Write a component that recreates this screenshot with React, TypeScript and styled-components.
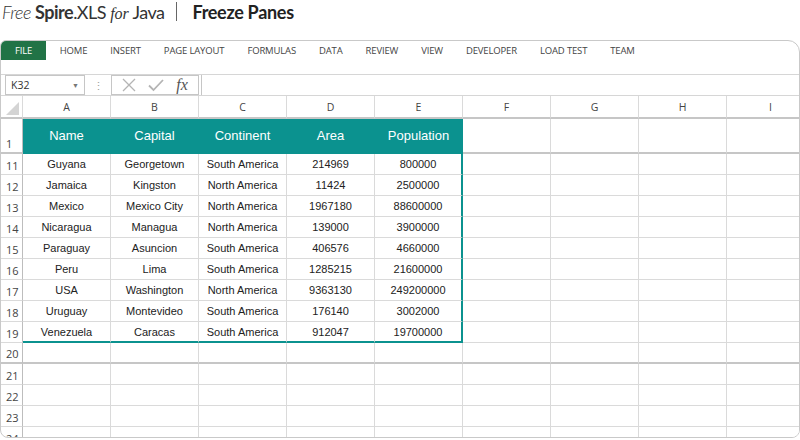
import React from "react";
import styled, { createGlobalStyle } from "styled-components";

const GlobalStyle = createGlobalStyle`
  html, body {
    margin: 0;
    padding: 0;
    background: #ffffff;
    width: 800px;
    height: 440px;
    overflow: hidden;
  }
`;

const TEAL = "#0b928f";
const GRID = "#dadada";
const UI_FONT = `"Open Sans", "Noto Sans", sans-serif`;
const CELL_FONT = `"Liberation Sans", Arial, sans-serif`;

const Page = styled.div`
  width: 800px;
  height: 440px;
  display: flex;
  flex-direction: column;
`;

const TitleBar = styled.div`
  height: 40px;
  flex-shrink: 0;
  display: flex;
  align-items: flex-start;
  padding: 0 0 0 2px;
  box-sizing: border-box;
  font-family: Lato, "Open Sans", sans-serif;
  color: #333;
`;

const Brand = styled.div`
  font-size: 18px;
  line-height: 24px;
  letter-spacing: -0.5px;
  white-space: nowrap;
  i {
    font-style: italic;
    font-weight: 300;
  }
  b {
    font-weight: 700;
  }
  em {
    font-family: "Liberation Serif", serif;
    font-style: italic;
    font-size: 16px;
    letter-spacing: 0;
  }
`;

const Divider = styled.div`
  width: 1px;
  height: 19px;
  margin: 2px 15px 0 12px;
  background: #666;
`;

const Subject = styled.div`
  font-size: 18px;
  line-height: 24px;
  font-weight: 700;
  letter-spacing: -0.3px;
  color: #222;
`;

const Window = styled.div`
  flex: 1;
  min-height: 0;
  margin-bottom: 2px;
  border: 1px solid #c9c9c9;
  border-radius: 6px 12px 8px 8px;
  overflow: hidden;
  display: flex;
  flex-direction: column;
`;

const Tabs = styled.div`
  height: 19px;
  flex-shrink: 0;
  display: flex;
  align-items: stretch;
  font-family: ${UI_FONT};
  font-size: 9.5px;
`;

const Tab = styled.div<{ $active?: boolean }>`
  display: flex;
  align-items: center;
  justify-content: center;
  padding: ${(p) => (p.$active ? "0 14px" : "0 11.5px")};
  background: ${(p) => (p.$active ? "#217346" : "transparent")};
  color: ${(p) => (p.$active ? "#ffffff" : "#444")};
  margin-right: ${(p) => (p.$active ? "2px" : "0")};
  letter-spacing: -0.15px;
  white-space: nowrap;
`;

const Ribbon = styled.div`
  height: 14px;
  flex-shrink: 0;
  border-bottom: 1px solid #d6d6d6;
`;

const FormulaBar = styled.div`
  height: 20px;
  flex-shrink: 0;
  display: flex;
  align-items: stretch;
  padding: 0 0 0 4px;
  border-bottom: 1px solid #d6d6d6;
  font-family: ${UI_FONT};
`;

const NameBox = styled.div`
  width: 80px;
  box-sizing: border-box;
  border: 1px solid #c6c6c6;
  display: flex;
  align-items: center;
  justify-content: space-between;
  padding: 0 5px 0 5px;
  font-size: 10.5px;
  color: #333;
`;

const Caret = styled.span`
  font-size: 7px;
  color: #777;
`;

const Grip = styled.div`
  width: 26px;
  display: flex;
  align-items: center;
  justify-content: center;
  color: #a0a0a0;
  font-size: 11px;
`;

const FxBox = styled.div`
  width: 88px;
  box-sizing: border-box;
  border: 1px solid #c6c6c6;
  display: flex;
  align-items: center;
  justify-content: space-around;
  padding: 0 4px 0 4px;
`;

const Fx = styled.span`
  font-family: "Liberation Serif", serif;
  font-style: italic;
  font-size: 16px;
  color: #555;
`;

const FormulaInput = styled.div`
  flex: 1;
  margin-left: 2px;
  border-left: 1px solid #c6c6c6;
`;

const Sheet = styled.div`
  display: grid;
  grid-template-columns: 22px repeat(9, 88px);
  grid-template-rows: 23px 35px repeat(14, 21px);
  font-family: ${CELL_FONT};
`;

const Corner = styled.div`
  box-sizing: border-box;
  border-right: 1px solid ${GRID};
  border-bottom: 2px solid #c6c6c6;
  display: flex;
  align-items: flex-end;
  justify-content: flex-end;
  padding: 0 3px 2px 0;
`;

const ColHead = styled.div`
  box-sizing: border-box;
  border-right: 1px solid ${GRID};
  border-bottom: 2px solid #c6c6c6;
  display: flex;
  align-items: center;
  justify-content: center;
  font-family: ${UI_FONT};
  font-size: 10.5px;
  color: #444;
`;

const RowHead = styled.div<{ $thick?: boolean }>`
  box-sizing: border-box;
  border-right: 1px solid #bdbdbd;
  border-bottom: ${(p) => (p.$thick ? "2px solid #c6c6c6" : `1px solid ${GRID}`)};
  display: flex;
  align-items: flex-end;
  padding: 0 0 1px 5px;
  font-family: ${UI_FONT};
  font-size: 11px;
  color: #444;
`;

const Cell = styled.div<{
  $head?: boolean;
  $thick?: boolean;
  $edgeRight?: boolean;
  $edgeBottom?: boolean;
}>`
  box-sizing: border-box;
  display: flex;
  align-items: center;
  justify-content: center;
  white-space: nowrap;
  overflow: hidden;
  background: ${(p) => (p.$head ? TEAL : "#ffffff")};
  color: ${(p) => (p.$head ? "#ffffff" : "#222")};
  font-size: ${(p) => (p.$head ? "13px" : "11px")};
  border-right: ${(p) =>
    p.$head
      ? `1px solid ${TEAL}`
      : p.$edgeRight
      ? `2px solid ${TEAL}`
      : `1px solid ${GRID}`};
  border-bottom: ${(p) =>
    p.$head
      ? `2px solid ${TEAL}`
      : p.$edgeBottom
      ? `2px solid ${TEAL}`
      : p.$thick
      ? "2px solid #c6c6c6"
      : `1px solid ${GRID}`};
`;

const columns = ["A", "B", "C", "D", "E", "F", "G", "H", "I"];
const headers = ["Name", "Capital", "Continent", "Area", "Population"];

const data: string[][] = [
  ["Guyana", "Georgetown", "South America", "214969", "800000"],
  ["Jamaica", "Kingston", "North America", "11424", "2500000"],
  ["Mexico", "Mexico City", "North America", "1967180", "88600000"],
  ["Nicaragua", "Managua", "North America", "139000", "3900000"],
  ["Paraguay", "Asuncion", "South America", "406576", "4660000"],
  ["Peru", "Lima", "South America", "1285215", "21600000"],
  ["USA", "Washington", "North America", "9363130", "249200000"],
  ["Uruguay", "Montevideo", "South America", "176140", "3002000"],
  ["Venezuela", "Caracas", "South America", "912047", "19700000"],
];

const tabs = [
  "HOME",
  "INSERT",
  "PAGE LAYOUT",
  "FORMULAS",
  "DATA",
  "REVIEW",
  "VIEW",
  "DEVELOPER",
  "LOAD TEST",
  "TEAM",
];

const CancelIcon = () => (
  <svg width="14" height="14" viewBox="0 0 14 14">
    <path d="M1 1L13 13M13 1L1 13" stroke="#b4b4b4" strokeWidth="1.3" fill="none" />
  </svg>
);

const CheckIcon = () => (
  <svg width="16" height="14" viewBox="0 0 16 14">
    <path d="M1 7.5L5.5 12L15 2" stroke="#b4b4b4" strokeWidth="1.8" fill="none" />
  </svg>
);

const SelectAll = () => (
  <svg width="13" height="13" viewBox="0 0 13 13">
    <polygon points="13,0 13,13 0,13" fill="#d4d4d4" />
  </svg>
);

export default function App() {
  const emptyRows = [20, 21, 22, 23, 24];
  return (
    <Page>
      <GlobalStyle />
      <TitleBar>
        <Brand>
          <i>Free</i> <b>Spire</b>.XLS <em>for</em> Java
        </Brand>
        <Divider />
        <Subject>Freeze Panes</Subject>
      </TitleBar>
      <Window>
        <Tabs>
          <Tab $active>FILE</Tab>
          {tabs.map((t) => (
            <Tab key={t}>{t}</Tab>
          ))}
        </Tabs>
        <Ribbon />
        <FormulaBar>
          <NameBox>
            K32
            <Caret>▼</Caret>
          </NameBox>
          <Grip>⋮</Grip>
          <FxBox>
            <CancelIcon />
            <CheckIcon />
            <Fx>fx</Fx>
          </FxBox>
          <FormulaInput />
        </FormulaBar>
        <Sheet>
          <Corner>
            <SelectAll />
          </Corner>
          {columns.map((c) => (
            <ColHead key={c}>{c}</ColHead>
          ))}

          <RowHead $thick>1</RowHead>
          {columns.map((c, i) =>
            i < headers.length ? (
              <Cell key={c} $head>
                {headers[i]}
              </Cell>
            ) : (
              <Cell key={c} $thick />
            )
          )}

          {data.map((row, r) => (
            <React.Fragment key={r}>
              <RowHead>{11 + r}</RowHead>
              {columns.map((c, i) => (
                <Cell
                  key={c}
                  $edgeRight={i === 4}
                  $edgeBottom={r === data.length - 1 && i < 5}
                >
                  {row[i] ?? ""}
                </Cell>
              ))}
            </React.Fragment>
          ))}

          {emptyRows.map((n) => (
            <React.Fragment key={n}>
              <RowHead $thick={n === 20}>{n}</RowHead>
              {columns.map((c) => (
                <Cell key={c} $thick={n === 20} />
              ))}
            </React.Fragment>
          ))}
        </Sheet>
      </Window>
    </Page>
  );
}
